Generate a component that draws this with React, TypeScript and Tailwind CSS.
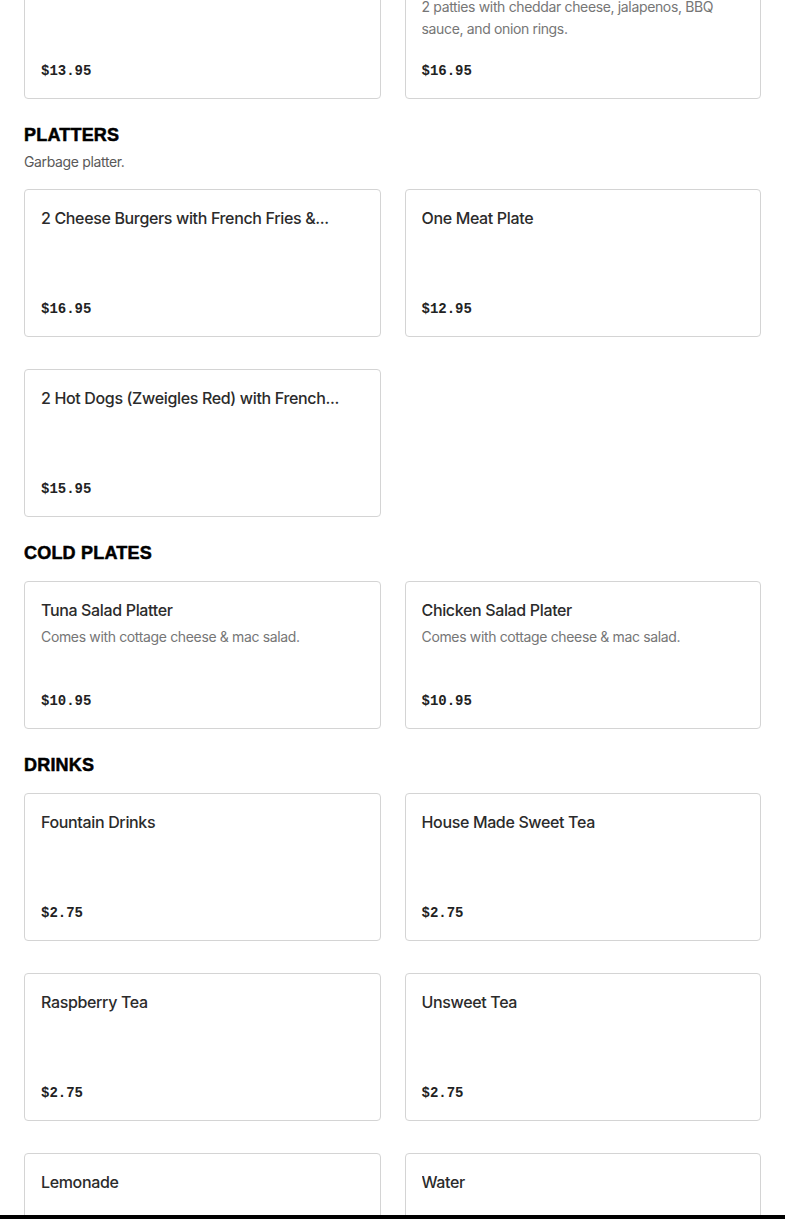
type Item = { name: string; short?: string; desc?: string; price: string };
type Section = { title?: string; desc?: string; items: Item[] };

const sections: Section[] = [
  {
    items: [
      { name: "Bacon Cheese Burger", price: "$13.95" },
      {
        name: "Western Burger",
        desc: "2 patties with cheddar cheese, jalapenos, BBQ sauce, and onion rings.",
        price: "$16.95",
      },
    ],
  },
  {
    title: "PLATTERS",
    desc: "Garbage platter.",
    items: [
      {
        name: "2 Cheese Burgers with French Fries & Onion Rings",
        short: "2 Cheese Burgers with French Fries &...",
        price: "$16.95",
      },
      { name: "One Meat Plate", price: "$12.95" },
      {
        name: "2 Hot Dogs (Zweigles Red) with French Fries & Macaroni Salad",
        short: "2 Hot Dogs (Zweigles Red) with French...",
        price: "$15.95",
      },
    ],
  },
  {
    title: "COLD PLATES",
    items: [
      { name: "Tuna Salad Platter", desc: "Comes with cottage cheese & mac salad.", price: "$10.95" },
      { name: "Chicken Salad Plater", desc: "Comes with cottage cheese & mac salad.", price: "$10.95" },
    ],
  },
  {
    title: "DRINKS",
    items: [
      { name: "Fountain Drinks", price: "$2.75" },
      { name: "House Made Sweet Tea", price: "$2.75" },
      { name: "Raspberry Tea", price: "$2.75" },
      { name: "Unsweet Tea", price: "$2.75" },
      { name: "Lemonade", price: "$2.75" },
      { name: "Water", price: "$2.75" },
    ],
  },
];

function MenuCard({ item }: { item: Item }) {
  return (
    <div className="h-[148px] flex flex-col border border-[#d4d4d4] rounded-[4px] bg-white px-4 pt-4 pb-4">
      <h3
        title={item.name}
        className="text-[16px] leading-6 font-medium tracking-[-0.35px] text-[#2b2b2b] line-clamp-1"
      >
        {item.short ?? item.name}
      </h3>
      {item.desc ? (
        <p className="mt-[4px] text-[14px] leading-[22px] tracking-[-0.35px] text-[#767676] line-clamp-2">
          {item.desc}
        </p>
      ) : null}
      <div className="mt-auto font-['Liberation_Mono',monospace] font-bold text-[14px] leading-[22px] text-[#222]">
        {item.price}
      </div>
    </div>
  );
}

export default function App() {
  return (
    <div className="bg-white min-h-screen overflow-hidden font-['Inter',sans-serif]">
      <div className="-mt-[49px] px-6 pb-10">
        {sections.map((s, i) => (
          <section key={i} className={i > 0 ? "mt-[22px]" : ""}>
            {s.title ? (
              <div className="mb-[14px]">
                <h2 className="font-['Liberation_Sans',sans-serif] font-black text-[18px] leading-7 text-black tracking-[0.2px] [-webkit-text-stroke:0.5px_black]">
                  {s.title}
                </h2>
                {s.desc ? (
                  <p className="mt-[2px] pb-[2px] text-[14px] leading-[22px] tracking-[-0.35px] text-[#595959]">
                    {s.desc}
                  </p>
                ) : null}
              </div>
            ) : null}
            <div className="grid grid-cols-2 gap-x-6 gap-y-8">
              {s.items.map((it) => (
                <MenuCard key={it.name} item={it} />
              ))}
            </div>
          </section>
        ))}
      </div>
      <div className="fixed bottom-0 left-0 right-0 h-[4px] bg-black" />
    </div>
  );
}
